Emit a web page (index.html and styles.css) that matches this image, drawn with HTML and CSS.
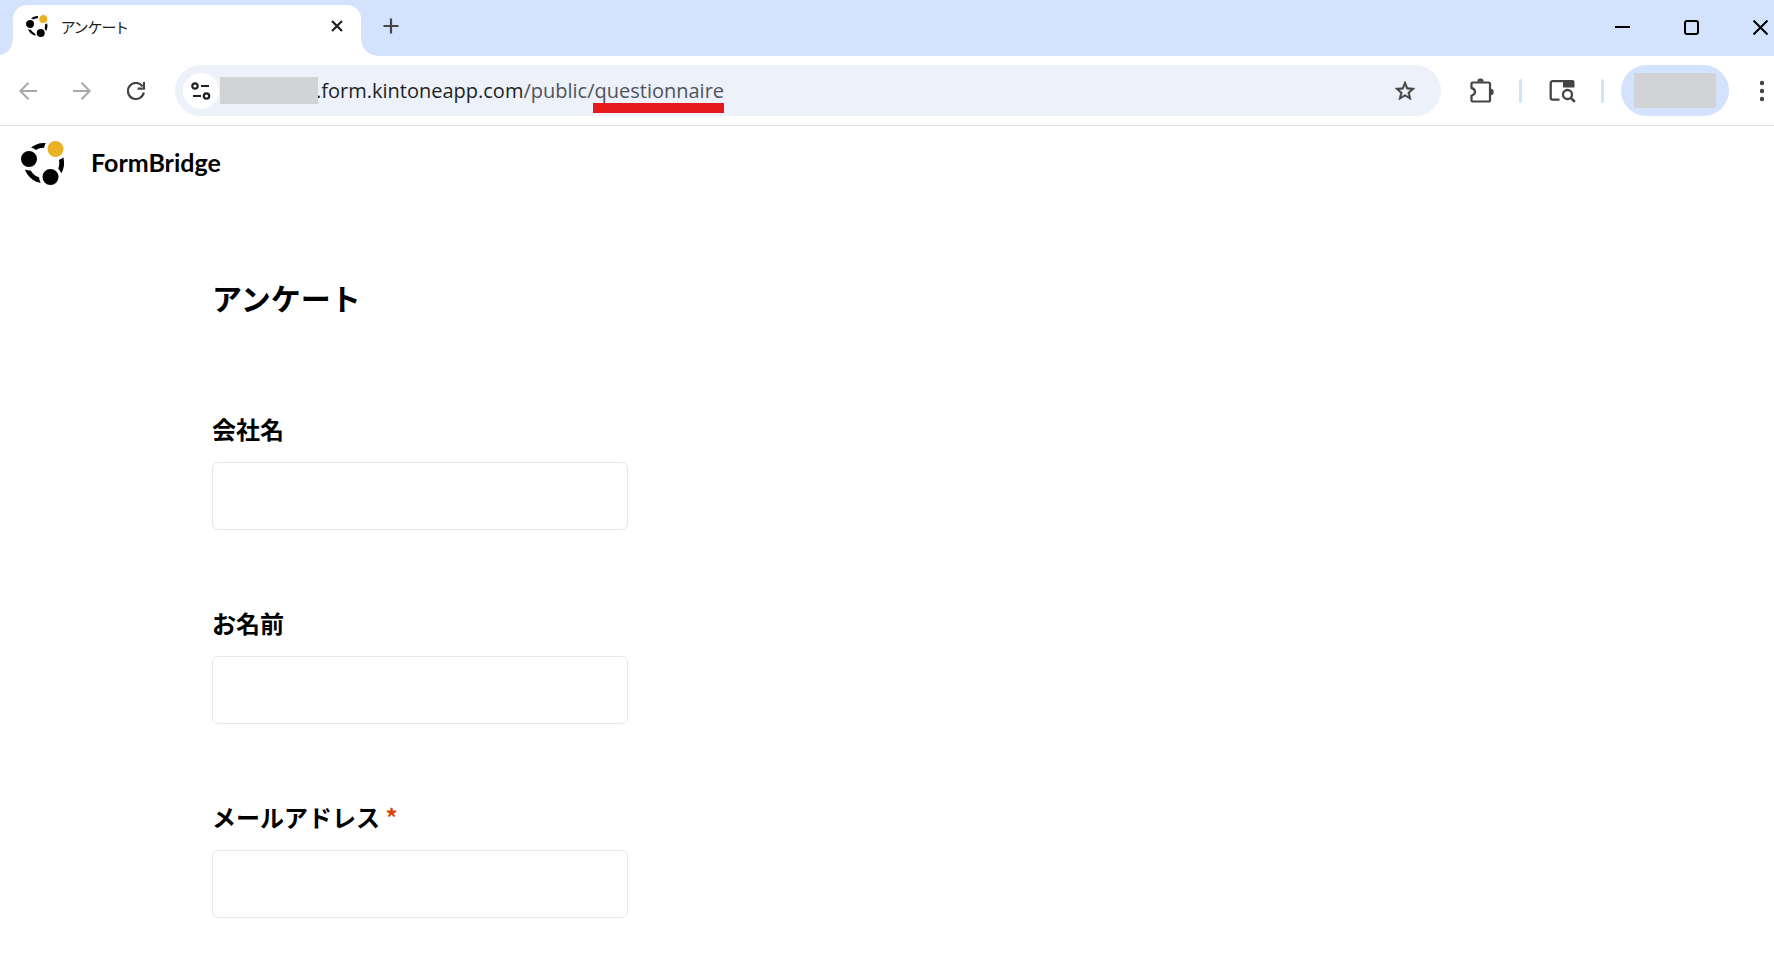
FILE: index.html
```html
<!DOCTYPE html>
<html lang="ja">
<head>
<meta charset="utf-8">
<title>アンケート</title>
<link rel="stylesheet" href="styles.css">
</head>
<body>
<svg class="symbols" aria-hidden="true">
  <symbol id="logo" viewBox="0 0 44 44">
    <circle cx="23" cy="22" r="17.700" fill="none" stroke="#000" stroke-width="4.800"/>
    <g stroke="#fff" stroke-width="3.400">
      <circle cx="8" cy="18" r="9.700"/>
      <circle cx="29.500" cy="36" r="9.700"/>
      <circle cx="34.500" cy="8" r="9.700" fill="#e9b123"/>
    </g>
  </symbol>
</svg>

<header class="browser">
  <div class="tabstrip">
    <div class="tab">
      <svg class="favicon" aria-hidden="true"><use href="#logo"/></svg>
      <span class="tab-title">アンケート</span>
      <button class="icon-btn tab-close" aria-label="タブを閉じる">
        <svg width="12" height="12" viewBox="0 0 12 12"><path d="M1 1l10 10M11 1L1 11" stroke="#1f1f1f" stroke-width="2.2"/></svg>
      </button>
    </div>
    <button class="icon-btn new-tab" aria-label="新しいタブ">
      <svg width="16" height="16" viewBox="0 0 16 16"><path d="M8 0.500v15M0.500 8h15" stroke="#444" stroke-width="2.2"/></svg>
    </button>
    <div class="window-controls">
      <button class="icon-btn" aria-label="最小化"><svg width="16" height="16" viewBox="0 0 16 16"><path d="M0 7h15" stroke="#000" stroke-width="2"/></svg></button>
      <button class="icon-btn" aria-label="最大化"><svg width="16" height="16" viewBox="0 0 16 16"><rect x="1" y="1" width="13" height="13" rx="2" fill="none" stroke="#000" stroke-width="2"/></svg></button>
      <button class="icon-btn" aria-label="閉じる"><svg width="16" height="16" viewBox="0 0 16 16"><path d="M0.500 0.500l14 14M14.500 0.500l-14 14" stroke="#000" stroke-width="2"/></svg></button>
    </div>
  </div>

  <div class="toolbar">
    <nav class="nav-buttons">
      <button class="icon-btn" aria-label="戻る"><svg width="18" height="18" viewBox="0 0 18 18"><path d="M18 9H1.500M9.500 0.800L1.300 9l8.200 8.200" fill="none" stroke="#a9a9a9" stroke-width="2"/></svg></button>
      <button class="icon-btn" aria-label="進む"><svg width="18" height="18" viewBox="0 0 18 18"><path d="M0 9h16.500M8.500 0.800L16.700 9l-8.200 8.200" fill="none" stroke="#a9a9a9" stroke-width="2"/></svg></button>
      <button class="icon-btn" aria-label="再読み込み"><svg width="18" height="18" viewBox="0 0 18 18"><path d="M16.800 10.500A8 8 0 1 1 15.500 4.400" fill="none" stroke="#444" stroke-width="2.200"/><path d="M17 0v6.600H10.600" fill="none" stroke="#444" stroke-width="2.200"/></svg></button>
    </nav>
    <div class="omnibox">
      <button class="icon-btn site-info" aria-label="サイト情報">
        <svg width="20" height="18" viewBox="0 0 20 18" fill="none" stroke="#1f1f1f" stroke-width="2.200"><circle cx="4" cy="4" r="2.700"/><path d="M10 4h8M2 14h8"/><circle cx="15.500" cy="14" r="2.700"/></svg>
      </button>
      <span class="mask mask-host"></span>
      <span class="url">.form.kintoneapp.com<span class="path">/public/<span class="marked">questionnaire</span></span></span>
      <button class="icon-btn star" aria-label="ブックマーク">
        <svg width="24" height="24" viewBox="0 0 24 24"><path d="M22 9.240l-7.190-.620L12 2 9.190 8.630 2 9.240l5.460 4.730L5.820 21 12 17.270 18.180 21l-1.630-7.030L22 9.240zM12 15.400l-3.760 2.270 1-4.280-3.320-2.880 4.380-.380L12 6.100l1.710 4.040 4.380.380-3.320 2.880 1 4.280L12 15.400z" fill="#444" stroke="#444" stroke-width=".5"/></svg>
      </button>
    </div>
    <button class="icon-btn extensions" aria-label="拡張機能">
      <svg width="26" height="26" viewBox="0 0 26 26"><path d="M3.500 4.500h16a1.500 1.500 0 0 1 1.500 1.500v16a1.500 1.500 0 0 1-1.500 1.500h-16a1 1 0 0 1-1-1v-4.800q3.500-1.200 3.500-3.900t-3.500-3.900v-4.400a1 1 0 0 1 1-1z" fill="none" stroke="#444" stroke-width="2.200"/><path d="M8.300 3.800a3.200 3.200 0 0 1 6.400 0zM21.500 10.800a3.200 3.200 0 0 1 0 6.400z" fill="#444"/></svg>
    </button>
    <span class="divider"></span>
    <button class="icon-btn side-search" aria-label="サイドパネル">
      <svg width="27" height="24" viewBox="0 0 27 24" fill="none" stroke="#444" stroke-width="2.300"><path d="M10.500 20.700H3.500A1.800 1.800 0 0 1 1.700 19V4A1.800 1.800 0 0 1 3.500 2.200H23"/><path d="M14 1h9.500a2 2 0 0 1 2 2v5.500H14z" fill="#444" stroke="none"/><circle cx="18.500" cy="15.500" r="4.500"/><path d="M21.800 18.800l4 4" stroke-width="2.600"/></svg>
    </button>
    <span class="divider"></span>
    <button class="profile" aria-label="プロフィール"><span class="mask mask-profile"></span></button>
    <button class="icon-btn more" aria-label="メニュー">
      <svg width="6" height="22" viewBox="0 0 6 22" fill="#444"><circle cx="3" cy="3" r="2.200"/><circle cx="3" cy="11" r="2.200"/><circle cx="3" cy="19" r="2.200"/></svg>
    </button>
  </div>
</header>

<div class="brand">
  <svg class="brand-logo" aria-hidden="true"><use href="#logo"/></svg>
  <span class="brand-name">FormBridge</span>
</div>

<main class="content">
  <h1 class="title">アンケート</h1>
  <form class="form">
    <div class="field">
      <label class="label" for="company">会社名</label>
      <input class="input" id="company" type="text">
    </div>
    <div class="field">
      <label class="label" for="name">お名前</label>
      <input class="input" id="name" type="text">
    </div>
    <div class="field">
      <label class="label" for="email">メールアドレス <span class="required">*</span></label>
      <input class="input" id="email" type="email" required>
    </div>
  </form>
</main>
</body>
</html>
```
FILE: styles.css
```css
* { box-sizing: border-box; }

body {
  margin: 0;
  background: #fff;
  color: #000;
  font-family: "Open Sans", "Noto Sans CJK JP", sans-serif;
}

.symbols { position: absolute; width: 0; height: 0; }

svg { display: block; }

.icon-btn {
  display: flex;
  flex: none;
  padding: 0;
  border: 0;
  background: none;
}

/* Tab strip */
.tabstrip {
  display: flex;
  align-items: flex-end;
  height: 56px;
  padding: 0 5px 0 13px;
  background: #d3e2fd;
}

.tab {
  position: relative;
  display: flex;
  align-items: center;
  width: 348px;
  height: 51px;
  padding: 0 18px 9px 13px;
  border-radius: 14px 14px 0 0;
  background: #fff;
}

.tab::before,
.tab::after {
  content: "";
  position: absolute;
  bottom: 0;
  width: 16px;
  height: 16px;
}

.tab::before {
  right: 100%;
  background: radial-gradient(circle at 0 0, transparent 15px, #fff 16px);
}

.tab::after {
  left: 100%;
  background: radial-gradient(circle at 100% 0, transparent 15px, #fff 16px);
}

.favicon { width: 22px; height: 22px; }

.tab-title {
  flex: 1;
  margin-left: 13px;
  padding-top: 2px;
  color: #1f1f1f;
  font-family: "Noto Sans CJK JP", sans-serif;
  font-size: 15px;
  line-height: 22px;
  font-feature-settings: "palt";
}

.new-tab { margin: 0 auto 22px 22px; }

.window-controls {
  display: flex;
  gap: 53px;
  margin-bottom: 20px;
}

/* Toolbar */
.toolbar {
  display: flex;
  align-items: center;
  height: 70px;
  padding: 0 9px 0 19px;
  border-bottom: 1px solid #dedede;
}

.nav-buttons { display: flex; gap: 36px; }

.omnibox {
  display: flex;
  flex: 1;
  align-items: center;
  height: 51px;
  margin-left: 30px;
  padding: 0 24px 0 8px;
  border-radius: 26px;
  background: #ecf1fa;
}

.site-info {
  align-items: center;
  justify-content: center;
  width: 36px;
  height: 36px;
  border-radius: 50%;
  background: #fff;
}

.mask { flex: none; background: #d1d3d4; }

/* Covers the start of the address, up to its first dot */
.mask-host {
  z-index: 1;
  width: 98px;
  height: 27px;
  margin: 0 -2px 0 1px;
}

.url {
  flex: 1;
  color: #1f1f1f;
  font-size: 20px;
  line-height: 30px;
  white-space: nowrap;
}

.path { color: #50545a; }
.marked { position: relative; }

.marked::after {
  content: "";
  position: absolute;
  right: 0;
  bottom: -9px;
  left: -2px;
  height: 10px;
  background: #e71b1b;
}

.extensions { margin-left: 28px; }

.divider {
  flex: none;
  width: 3px;
  height: 24px;
  border-radius: 2px;
  background: #d3e2fd;
}

.extensions + .divider { margin-left: 24px; }
.side-search { margin-left: 27px; }
.side-search + .divider { margin-left: 25px; }

.profile {
  display: flex;
  flex: none;
  align-items: center;
  justify-content: center;
  width: 108px;
  height: 51px;
  margin-left: 17px;
  padding: 0;
  border: 0;
  border-radius: 26px;
  background: #d3e2fd;
}

.mask-profile { width: 82px; height: 35px; }
.more { margin-left: 30px; }

/* Form page */
.brand {
  display: flex;
  align-items: center;
  gap: 26px;
  padding: 15px 21px;
}

.brand-logo { width: 44px; height: 44px; }

.brand-name {
  padding-bottom: 2px;
  font-family: Lato, sans-serif;
  font-size: 25px;
  font-weight: 700;
  line-height: 32px;
}

.content {
  padding: 75px 212px 36px;
  font-family: "Noto Sans CJK JP", sans-serif;
}

.title {
  margin: 0;
  font-size: 30px;
  font-weight: 700;
  line-height: 44px;
}

.form {
  display: grid;
  gap: 75px;
  margin-top: 92px;
}

.field { display: grid; gap: 15px; }

.label {
  font-size: 24px;
  font-weight: 700;
  line-height: 36px;
}

.required { color: #d4460a; }

.input {
  width: 100%;
  max-width: 416px;
  height: 68px;
  padding: 0 16px;
  border: 1px solid #e8e8e8;
  border-radius: 6px;
  background: #fff;
  font: inherit;
  font-size: 24px;
}
```
